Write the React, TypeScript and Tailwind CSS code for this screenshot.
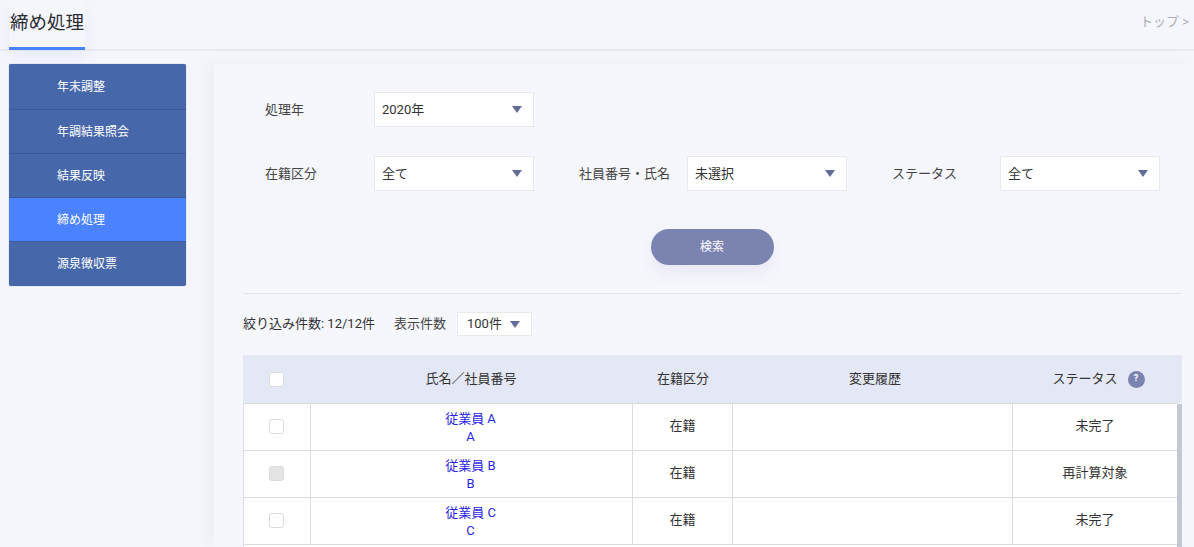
const font = { fontFamily: 'Roboto, "Noto Sans CJK JP", "Noto Sans", sans-serif' };

const menu = ["年末調整", "年調結果照会", "結果反映", "締め処理", "源泉徴収票"];

const rows = [
  { name: "従業員 A", no: "A", status: "未完了", locked: false },
  { name: "従業員 B", no: "B", status: "再計算対象", locked: true },
  { name: "従業員 C", no: "C", status: "未完了", locked: false },
];

function Caret() {
  return (
    <svg width="10" height="7" viewBox="0 0 10 7" className="shrink-0">
      <path d="M0 0h10L5 7z" fill="#646c9c" />
    </svg>
  );
}

function Select({ value, width = "w-40" }: { value: string; width?: string }) {
  return (
    <div className={`${width} h-[35px] flex items-center justify-between pl-[7px] pr-[11px] bg-white border border-[#e8e9ee] text-[13px] text-[#333]`}>
      <span className="mt-[1px]">{value}</span>
      <Caret />
    </div>
  );
}

function Check({ locked = false }: { locked?: boolean }) {
  return (
    <span className={`block w-[15px] h-[15px] rounded-[3px] border border-[#dcdcdc] ${locked ? "bg-[#e4e4e4]" : "bg-white"}`} />
  );
}

export default function App() {
  return (
    <div style={font} className="w-[1194px] h-[547px] overflow-hidden bg-[#f5f6fb] text-[#333]">
      <header className="h-[51px] flex justify-between border-b-2 border-[#e9eaf0] pl-[9px] pr-[5px]">
        <h1 className="w-[76px] h-[50px] border-b-[3px] border-[#4a82ff] text-[18.5px] leading-[47px] pl-[1px] text-[#2b2b33] whitespace-nowrap shadow-[0_8px_14px_rgba(74,130,255,0.08)]">
          締め処理
        </h1>
        <span className="text-[13px] leading-[43px] text-[#adadb3]">トップ &gt;</span>
      </header>

      <div className="flex pt-[13px] pl-[9px]">
        <nav className="w-[177px] h-[222px] shrink-0 rounded-[2px] overflow-hidden bg-[#4767ab] shadow-[0_0_1px_rgba(40,60,120,0.6)]">
          {menu.map((item, i) => (
            <div
              key={item}
              className={`${i === 0 ? "h-[46px]" : "h-[44px]"} flex items-center pl-[48px] text-[12px] text-white border-b border-[#3c5a97] ${i === 3 ? "bg-[#4a82ff]" : ""} ${i === 4 ? "border-b-0" : ""}`}
            >
              {item}
            </div>
          ))}
        </nav>

        <main className="ml-[28px] w-[980px] h-[483px] pl-[29px] pr-[12px] bg-[#f6f7fc] shadow-[-8px_-2px_12px_rgba(60,70,110,0.03)]">
          <div className="flex items-center h-[35px] mt-[28px] text-[13px]">
            <span className="w-[131px] pl-[22px] mt-[1px] text-[#444]">処理年</span>
            <Select value="2020年" />
          </div>

          <div className="flex items-center h-[35px] mt-[29px] text-[13px]">
            <span className="w-[131px] pl-[22px] mt-[1px] text-[#444]">在籍区分</span>
            <Select value="全て" />
            <span className="w-[153px] pl-[45px] mt-[1px] text-[#444] whitespace-nowrap">社員番号・氏名</span>
            <Select value="未選択" />
            <span className="w-[153px] pl-[45px] mt-[1px] text-[#444] whitespace-nowrap">ステータス</span>
            <Select value="全て" />
          </div>

          <div className="flex justify-center mt-[38px]">
            <button className="w-[123px] h-9 mr-[1px] rounded-full bg-[#7b84b0] text-[12px] text-white shadow-[0_8px_16px_rgba(120,100,220,0.1)]">
              検索
            </button>
          </div>

          <div className="mt-[28px] border-t border-[#e3e4ea]" />

          <div className="flex items-center h-[24px] mt-[18px] text-[13px]">
            <span>絞り込み件数: 12/12件</span>
            <span className="ml-[19px] text-[#444]">表示件数</span>
            <div className="ml-[11px] w-[75px] h-[24px] flex items-center justify-between pl-[9px] pr-[11px] bg-white border border-[#e8e9ee]">
              <span>100件</span>
              <Caret />
            </div>
          </div>

          <div className="mt-[19px] w-[939px]">
            <div className="h-[48px] flex items-center bg-[#e4e7f5] text-[13px] text-[#333]">
              <div className="w-[67px] flex justify-center"><Check /></div>
              <div className="w-[322px] text-center">氏名／社員番号</div>
              <div className="w-[100px] pl-[2px] text-center">在籍区分</div>
              <div className="w-[280px] pl-[6px] text-center">変更履歴</div>
              <div className="w-[170px] pl-[3px] flex items-center justify-center gap-[10px]">
                ステータス
                <span className="w-[17px] h-[17px] rounded-full bg-[#7b84b0] text-white text-[9px] font-bold flex items-center justify-center">?</span>
              </div>
            </div>

            <div className="flex">
              <div className="w-[934px] bg-white border-l border-[#dcdcdc]">
                {rows.map((r) => (
                  <div key={r.no} className="h-[47px] flex items-center border-t border-[#dcdcdc] text-[13px]">
                    <div className="w-[67px] h-full pb-[2px] pr-[1px] flex items-center justify-center border-r border-[#dcdcdc]">
                      <Check locked={r.locked} />
                    </div>
                    <div className="w-[322px] h-full pt-[2px] pr-[2px] flex flex-col items-center justify-center leading-[18px] text-[#2a1fe6] border-r border-[#dcdcdc]">
                      <span>{r.name}</span>
                      <span>{r.no}</span>
                    </div>
                    <div className="w-[100px] h-full pb-[2px] flex items-center justify-center border-r border-[#dcdcdc]">在籍</div>
                    <div className="w-[280px] h-full border-r border-[#dcdcdc]" />
                    <div className="flex-1 pb-[2px] text-center">{r.status}</div>
                  </div>
                ))}
                <div className="h-[47px] border-t border-[#dcdcdc]" />
              </div>
              <div className="w-[5px] mt-[1px] bg-[#c3c7d6]" />
            </div>
          </div>
        </main>
      </div>
    </div>
  );
}
